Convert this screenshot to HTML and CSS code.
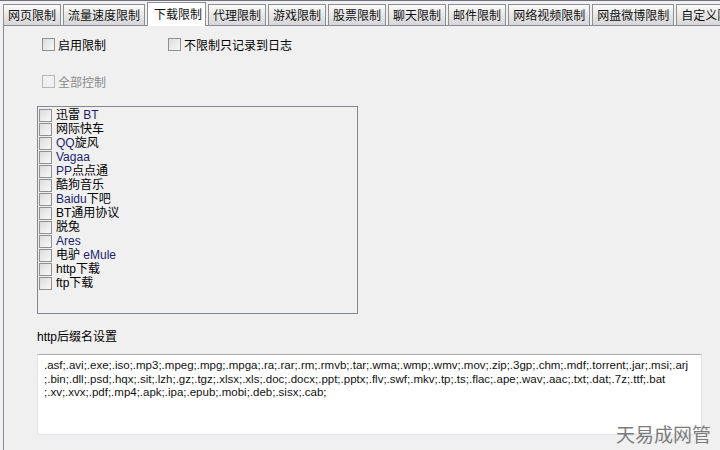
FILE: index.html
```html
<!DOCTYPE html>
<html lang="zh-CN">
<head>
<meta charset="utf-8">
<title>下载限制</title>
<link rel="stylesheet" href="styles.css">
</head>
<body>
<div class="window">
  <div class="tabs">
    <div class="tab">网页限制</div>
    <div class="tab">流量速度限制</div>
    <div class="tab active">下载限制</div>
    <div class="tab">代理限制</div>
    <div class="tab">游戏限制</div>
    <div class="tab">股票限制</div>
    <div class="tab">聊天限制</div>
    <div class="tab">邮件限制</div>
    <div class="tab">网络视频限制</div>
    <div class="tab">网盘微博限制</div>
    <div class="tab">自定义限制</div>
  </div>
  <div class="panel">
    <div class="row top-row">
      <label class="opt opt-wide"><span class="cb"></span><span>启用限制</span></label>
      <label class="opt"><span class="cb"></span><span>不限制只记录到日志</span></label>
    </div>
    <div class="row all-row">
      <label class="opt disabled"><span class="cb"></span><span>全部控制</span></label>
    </div>
    <div class="listbox">
      <div class="item"><span class="cb"></span><span>迅雷 <span class="en">BT</span></span></div>
      <div class="item"><span class="cb"></span><span>网际快车</span></div>
      <div class="item"><span class="cb"></span><span><span class="en">QQ</span>旋风</span></div>
      <div class="item"><span class="cb"></span><span class="en">Vagaa</span></div>
      <div class="item"><span class="cb"></span><span><span class="en">PP</span>点点通</span></div>
      <div class="item"><span class="cb"></span><span>酷狗音乐</span></div>
      <div class="item"><span class="cb"></span><span><span class="en">Baidu</span>下吧</span></div>
      <div class="item"><span class="cb"></span><span>BT通用协议</span></div>
      <div class="item"><span class="cb"></span><span>脱兔</span></div>
      <div class="item"><span class="cb"></span><span class="en">Ares</span></div>
      <div class="item"><span class="cb"></span><span>电驴 <span class="en">eMule</span></span></div>
      <div class="item"><span class="cb"></span><span>http下载</span></div>
      <div class="item"><span class="cb"></span><span>ftp下载</span></div>
    </div>
    <div class="suffix-label">http后缀名设置</div>
    <div class="textbox">
      <div class="line">.asf;.avi;.exe;.iso;.mp3;.mpeg;.mpg;.mpga;.ra;.rar;.rm;.rmvb;.tar;.wma;.wmp;.wmv;.mov;.zip;.3gp;.chm;.mdf;.torrent;.jar;.msi;.arj</div>
      <div class="line">;.bin;.dll;.psd;.hqx;.sit;.lzh;.gz;.tgz;.xlsx;.xls;.doc;.docx;.ppt;.pptx;.flv;.swf;.mkv;.tp;.ts;.flac;.ape;.wav;.aac;.txt;.dat;.7z;.ttf;.bat</div>
      <div class="line">;.xv;.xvx;.pdf;.mp4;.apk;.ipa;.epub;.mobi;.deb;.sisx;.cab;</div>
    </div>
  </div>
  <div class="watermark">天易成网管</div>
</div>
</body>
</html>
```
FILE: styles.css
```css
html, body {
  margin: 0;
  padding: 0;
}
body {
  width: 720px;
  height: 450px;
  overflow: hidden;
  background: #f0f0f0;
  font-family: "Liberation Sans", "Noto Sans CJK SC", sans-serif;
  font-size: 12px;
  color: #000;
}
.window {
  position: relative;
  width: 720px;
  height: 450px;
  border-top: 1px solid #6e7177;
  box-sizing: border-box;
}
.tabs {
  display: flex;
  gap: 2px;
  padding: 2px 0 0 3px;
  height: 22px;
  white-space: nowrap;
  position: relative;
  z-index: 2;
}
.tab {
  flex: none;
  height: 20px;
  line-height: 20px;
  margin-top: 1px;
  padding: 0 4px;
  border: 1px solid #8e8f8f;
  border-bottom: none;
  background: linear-gradient(#fbfbfb, #e4e4e4 60%, #d6d6d6);
  font-family: "Noto Sans CJK SC", sans-serif;
  font-size: 12px;
  color: #111;
}
.tab.active {
  height: 23px;
  line-height: 21px;
  margin-top: -1px;
  padding: 0 3px 0 6px;
  background: #fff;
}
.panel {
  border-top: 1px solid #898c95;
  border-left: 1px solid #898c95;
  margin-left: 3px;
  padding: 10px 0 0 33px;
  height: 440px;
  box-sizing: border-box;
}
.row {
  display: flex;
  padding-left: 5px;
  height: 16px;
  align-items: center;
}
.all-row {
  margin-top: 21px;
  color: #8a8a8a;
}
.opt {
  display: flex;
  align-items: center;
  gap: 3px;
  font-family: "Noto Sans CJK SC", sans-serif;
}
.opt-wide {
  width: 126px;
}
.cb {
  flex: none;
  width: 11px;
  height: 11px;
  border: 1px solid #8f8f8f;
  background: linear-gradient(135deg, #dcdcdc, #f8f8f8);
  box-sizing: content-box;
}
.disabled .cb {
  border-color: #b8b8b8;
  background: #f0f0f0;
}
.listbox {
  margin-top: 17px;
  width: 321px;
  height: 208px;
  box-sizing: border-box;
  border: 1px solid #828790;
  padding: 1px 0 0 1px;
}
.item {
  display: flex;
  align-items: center;
  gap: 4px;
  height: 14px;
  line-height: 14px;
  font-family: "Liberation Sans", "Noto Sans CJK SC", sans-serif;
  font-size: 12px;
  overflow: hidden;
}
.en {
  font-family: "Liberation Sans", sans-serif;
  font-size: 12px;
  color: #1b1f6e;
}
.suffix-label {
  margin-top: 15px;
  height: 16px;
  line-height: 16px;
  font-family: "Liberation Sans", "Noto Sans CJK SC", sans-serif;
}
.textbox {
  margin-top: 9px;
  width: 665px;
  height: 81px;
  box-sizing: border-box;
  background: #fff;
  border: 1px solid #e2e3ea;
  border-top-color: #abadb3;
  padding: 4px 0 0 6px;
  font-family: "Liberation Sans", sans-serif;
  font-size: 11.5px;
  line-height: 13.5px;
  color: #111;
}
.line {
  white-space: nowrap;
}
.watermark {
  position: absolute;
  right: 9px;
  bottom: 4px;
  font-family: "Noto Sans CJK SC", sans-serif;
  font-size: 19px;
  line-height: 24px;
  color: #7c7c7c;
}
```
